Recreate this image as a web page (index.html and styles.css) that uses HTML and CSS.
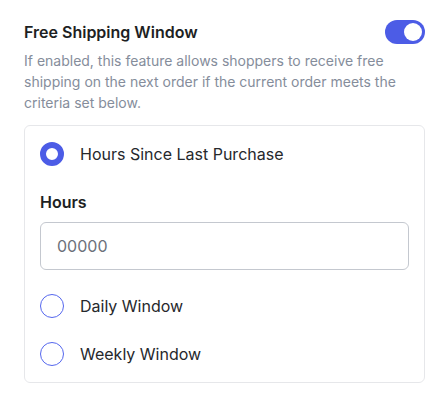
FILE: index.html
```html
<!DOCTYPE html>
<html lang="en">
<head>
    <meta charset="UTF-8">
    <meta name="viewport" content="width=device-width, initial-scale=1.0">
    <title>Free Shipping Window</title>
    <link rel="stylesheet" href="styles.css">
</head>
<body>
    <div class="panel">
        <div class="panel-header">
            <h2 class="panel-title">Free Shipping Window</h2>
            <label class="toggle">
                <input type="checkbox" checked>
                <span class="toggle-track"><span class="toggle-knob"></span></span>
            </label>
        </div>
        <p class="panel-desc">If enabled, this feature allows shoppers to receive free shipping on the next order if the current order meets the criteria set below.</p>

        <div class="card">
            <label class="radio-row">
                <input type="radio" name="window" checked>
                <span class="radio-dot selected"></span>
                <span class="radio-label">Hours Since Last Purchase</span>
            </label>

            <div class="field">
                <label class="field-label" for="hours">Hours</label>
                <input type="text" id="hours" class="field-input" placeholder="00000">
            </div>

            <label class="radio-row">
                <input type="radio" name="window">
                <span class="radio-dot"></span>
                <span class="radio-label">Daily Window</span>
            </label>

            <label class="radio-row">
                <input type="radio" name="window">
                <span class="radio-dot"></span>
                <span class="radio-label">Weekly Window</span>
            </label>
        </div>
    </div>
</body>
</html>
```

FILE: styles.css
```css
body {
    margin: 0;
    padding: 0;
    background-color: #fff;
    font-family: Inter, "Noto Sans", sans-serif;
    color: #212327;
}

.panel {
    padding: 20px 19px 0 24px;
}

.panel-header {
    display: flex;
    align-items: center;
    justify-content: space-between;
    height: 24px;
}

.panel-title {
    margin: 0;
    font-size: 16px;
    font-weight: 600;
    line-height: 24px;
    color: #1d1f23;
}

.toggle input {
    display: none;
}

.toggle-track {
    display: flex;
    align-items: center;
    justify-content: flex-end;
    width: 40px;
    height: 24px;
    box-sizing: border-box;
    padding: 0 3px;
    border-radius: 12px;
    background-color: #4c5ce6;
}

.toggle-knob {
    width: 18px;
    height: 18px;
    border-radius: 50%;
    background-color: #fff;
}

.panel-desc {
    margin: 6px 0 0;
    font-size: 14px;
    line-height: 21px;
    color: #858d9b;
}

.card {
    display: flex;
    flex-direction: column;
    gap: 24px;
    margin-top: 12px;
    padding: 16px 15px 16px 15px;
    border: 1px solid #e6e7ea;
    border-radius: 6px;
}

.radio-row {
    display: flex;
    align-items: center;
    gap: 16px;
    height: 24px;
}

.radio-row input {
    display: none;
}

.radio-dot {
    width: 24px;
    height: 24px;
    box-sizing: border-box;
    border: 1.5px solid #5567ee;
    border-radius: 50%;
    flex-shrink: 0;
}

.radio-dot.selected {
    border: 6px solid #4c5ce6;
}

.radio-label {
    font-size: 16px;
    line-height: 24px;
    color: #26282c;
}

.field {
    display: flex;
    flex-direction: column;
    gap: 8px;
}

.field-label {
    font-size: 16px;
    font-weight: 600;
    line-height: 24px;
    color: #1d1f23;
}

.field-input {
    height: 48px;
    box-sizing: border-box;
    padding: 0 16px;
    border: 1px solid #c4c8cf;
    border-radius: 6px;
    font-family: Inter, "Noto Sans", sans-serif;
    font-size: 16px;
    color: #26282c;
}

.field-input::placeholder {
    color: #6c717a;
}
```
